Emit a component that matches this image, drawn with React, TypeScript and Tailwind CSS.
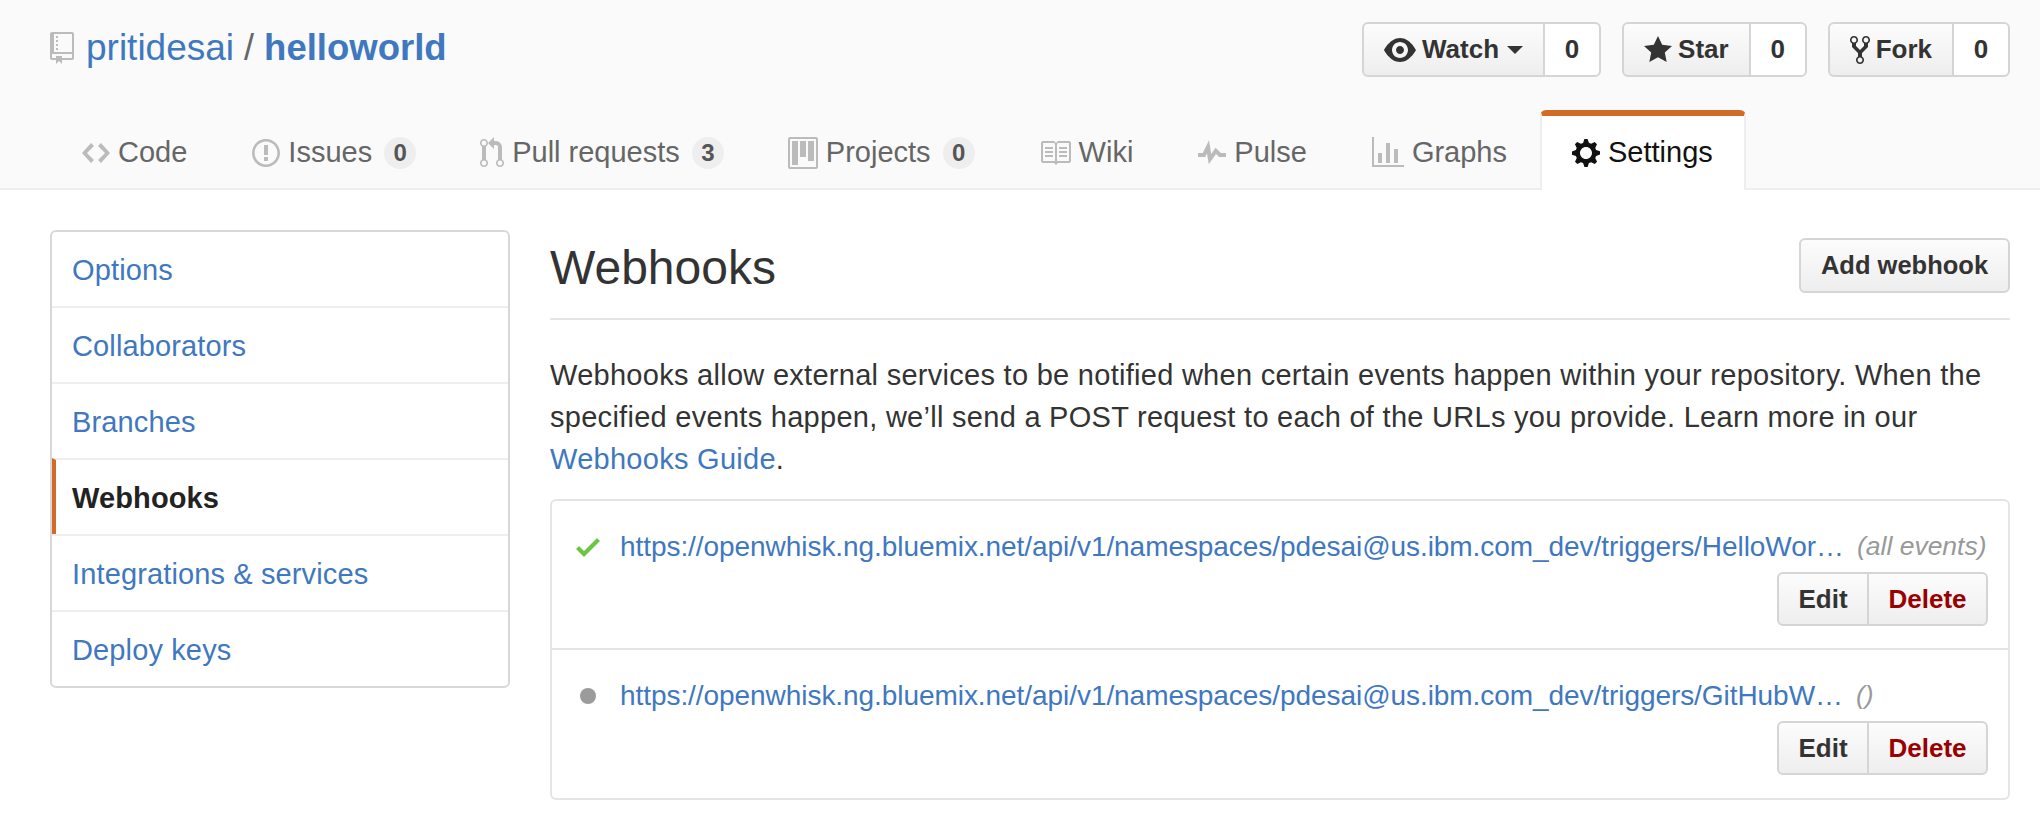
import React from 'react';

const icons: Record<string, { w: number; d: string }> = {
  repo: { w: 12, d: 'M4 9H3V8h1v1zm0-3H3v1h1V6zm0-2H3v1h1V4zm0-2H3v1h1V2zm8-1v12c0 .55-.45 1-1 1H6v2l-1.5-1.5L3 16v-2H1c-.55 0-1-.45-1-1V1c0-.55.45-1 1-1h10c.55 0 1 .45 1 1zm-1 10H1v2h2v-1h3v1h5v-2zm0-10H2v9h9V1z' },
  code: { w: 14, d: 'M9.5 3L8 4.5 11.5 8 8 11.5 9.5 13 14 8 9.5 3zm-5 0L0 8l4.5 5L6 11.5 2.5 8 6 4.5 4.5 3z' },
  issue: { w: 14, d: 'M7 2.3c3.14 0 5.7 2.56 5.7 5.7s-2.56 5.7-5.7 5.7A5.71 5.71 0 0 1 1.3 8c0-3.14 2.56-5.7 5.7-5.7zM7 1C3.14 1 0 4.14 0 8s3.14 7 7 7 7-3.14 7-7-3.14-7-7-7zm1 3H6v5h2V4zm0 6H6v2h2v-2z' },
  pull: { w: 12, d: 'M11 11.28V5c-.03-.78-.34-1.47-.94-2.06C9.46 2.35 8.78 2.03 8 2H7V0L4 3l3 3V4h1c.27.02.48.11.69.31.21.2.3.42.31.69v6.28A1.993 1.993 0 0 0 10 15a1.993 1.993 0 0 0 1-3.72zm-1 2.92c-.66 0-1.2-.55-1.2-1.2 0-.65.55-1.2 1.2-1.2.65 0 1.2.55 1.2 1.2 0 .65-.55 1.2-1.2 1.2zM4 3c0-1.11-.89-2-2-2a1.993 1.993 0 0 0-1 3.72v6.56A1.993 1.993 0 0 0 2 15a1.993 1.993 0 0 0 1-3.72V4.72c.59-.34 1-.98 1-1.72zm-.8 10c0 .66-.55 1.2-1.2 1.2-.65 0-1.2-.55-1.2-1.2 0-.65.55-1.2 1.2-1.2.65 0 1.2.55 1.2 1.2zM2 4.2C1.34 4.2.8 3.65.8 3c0-.65.55-1.2 1.2-1.2.65 0 1.2.55 1.2 1.2 0 .65-.55 1.2-1.2 1.2z' },
  project: { w: 15, d: 'M10 12h3V2h-3v10zm-4-2h3V2H6v8zm-4 4h3V2H2v12zm-1 1h13V1H1v14zM14 0H1a1 1 0 0 0-1 1v14a1 1 0 0 0 1 1h13a1 1 0 0 0 1-1V1a1 1 0 0 0-1-1z' },
  book: { w: 16, d: 'M3 5h4v1H3V5zm0 3h4V7H3v1zm0 2h4V9H3v1zm11-5h-4v1h4V5zm0 2h-4v1h4V7zm0 2h-4v1h4V9zm2-6v9c0 .55-.45 1-1 1H9.5l-1 1-1-1H2c-.55 0-1-.45-1-1V3c0-.55.45-1 1-1h5.5l1 1 1-1H15c.55 0 1 .45 1 1zm-8 .5L7.5 3H2v9h6V3.5zm7-.5H9.5l-.5.5V12h6V3z' },
  pulse: { w: 14, d: 'M11.5 8L8.8 5.4 6.6 8.5 5.5 1.6 2.38 8H0v2h3.6l.9-1.8.9 5.4L9 8.5l1.6 1.5H14V8z' },
  graph: { w: 16, d: 'M16 14v1H0V0h1v14h15zM5 13H3V8h2v5zm4 0H7V3h2v10zm4 0h-2V6h2v7z' },
  gear: { w: 14, d: 'M14 8.77v-1.6l-1.94-.64-.45-1.09.88-1.84-1.13-1.13-1.81.91-1.09-.45-.69-1.92h-1.6l-.63 1.94-1.11.45-1.84-.88-1.13 1.13.91 1.81-.45 1.09L0 7.23v1.59l1.94.64.45 1.09-.88 1.84 1.13 1.13 1.81-.91 1.09.45.69 1.92h1.59l.63-1.94 1.11-.45 1.84.88 1.13-1.13-.92-1.81.47-1.09L14 8.75v.02zM7 11c-1.66 0-3-1.34-3-3s1.34-3 3-3 3 1.34 3 3-1.34 3-3 3z' },
  eye: { w: 16, d: 'M8.06 2C3 2 0 8 0 8s3 6 8.06 6C13 14 16 8 16 8s-3-6-7.94-6zM8 12c-2.2 0-4-1.78-4-4 0-2.2 1.8-4 4-4 2.22 0 4 1.8 4 4 0 2.22-1.78 4-4 4zm2-4c0 1.11-.89 2-2 2-1.11 0-2-.89-2-2 0-1.11.89-2 2-2 1.11 0 2 .89 2 2z' },
  star: { w: 14, d: 'M14 6l-4.9-.64L7 1 4.9 5.36 0 6l3.6 3.26L2.67 14 7 11.67 11.33 14l-.93-4.74L14 6z' },
  fork: { w: 10, d: 'M8 1a1.993 1.993 0 0 0-1 3.72V6L5 8 3 6V4.72A1.993 1.993 0 0 0 2 1a1.993 1.993 0 0 0-1 3.72V6.5l3 3v1.78A1.993 1.993 0 0 0 5 15a1.993 1.993 0 0 0 1-3.72V9.5l3-3V4.72A1.993 1.993 0 0 0 8 1zM2 4.2C1.34 4.2.8 3.65.8 3c0-.65.55-1.2 1.2-1.2.65 0 1.2.55 1.2 1.2 0 .65-.55 1.2-1.2 1.2zm3 10c-.66 0-1.2-.55-1.2-1.2 0-.65.55-1.2 1.2-1.2.65 0 1.2.55 1.2 1.2 0 .65-.55 1.2-1.2 1.2zm3-10c-.66 0-1.2-.55-1.2-1.2 0-.65.55-1.2 1.2-1.2.65 0 1.2.55 1.2 1.2 0 .65-.55 1.2-1.2 1.2z' },
  check: { w: 12, d: 'M12 5l-8 8-4-4 1.5-1.5L4 10l6.5-6.5L12 5z' },
};

function Icon({ name, className }: { name: string; className?: string }) {
  const icon = icons[name];
  return (
    <svg
      viewBox={`0 0 ${icon.w} 16`}
      width={icon.w * 2}
      height={32}
      fill="currentColor"
      className={className}
      aria-hidden="true"
    >
      <path fillRule="evenodd" d={icon.d} />
    </svg>
  );
}

function RepoAction({ icon, label, count, caret }: { icon: string; label: string; count: string; caret?: boolean }) {
  return (
    <div className="flex h-[55px] text-[26px] font-bold text-[#333]">
      <div className="flex items-center gap-[6px] rounded-l-[6px] border-2 border-[#d5d5d5] bg-linear-to-b from-[#fcfcfc] to-[#eeeeee] px-[20px]">
        <Icon name={icon} className="shrink-0" />
        <span>{label}</span>
        {caret && <span className="ml-[2px] h-0 w-0 border-x-[8px] border-t-[8px] border-x-transparent border-t-[#333]" />}
      </div>
      <div className="-ml-[2px] flex w-[58px] items-center justify-center rounded-r-[6px] border-2 border-[#d5d5d5] bg-white">
        {count}
      </div>
    </div>
  );
}

function Tab({ icon, label, count }: { icon: string; label: string; count?: string }) {
  return (
    <a className="flex h-[79px] items-center gap-[8px] px-[32px] pt-[6px] text-[29px] text-[#666]">
      <Icon name={icon} className="shrink-0 text-[#bbbbbb]" />
      <span className="mr-[1px]">{label}</span>
      {count && (
        <span className="ml-[3px] flex h-[32px] min-w-[32px] items-center justify-center rounded-full bg-[#eeeeee] text-[24px] font-bold text-[#555]">
          {count}
        </span>
      )}
    </a>
  );
}

const menu = ['Options', 'Collaborators', 'Branches', 'Webhooks', 'Integrations & services', 'Deploy keys'];

function HookRow({ url, events, ok }: { url: string; events: string; ok?: boolean }) {
  return (
    <div className="h-[147px] pl-[24px] pr-[20px] pt-[21px]">
      <div className="flex h-[50px] items-center">
        <div className="flex w-[44px] shrink-0 justify-start">
          {ok ? (
            <Icon name="check" className="text-[#6cc644]" />
          ) : (
            <span className="ml-[4px] h-[16px] w-[16px] rounded-full bg-[#9b9b9b]" />
          )}
        </div>
        <a className="text-[28px] tracking-[-0.06px] whitespace-nowrap text-[#4078c0]">{url}</a>
        <em className="ml-[13px] text-[26.5px] whitespace-nowrap text-[#999]">{events}</em>
      </div>
      <div className="flex justify-end">
        <div className="flex h-[54px] text-[26px] font-bold">
          <div className="flex w-[92px] items-center justify-center rounded-l-[6px] border-2 border-[#d5d5d5] bg-linear-to-b from-[#fcfcfc] to-[#eeeeee] text-[#333]">
            Edit
          </div>
          <div className="-ml-[2px] flex w-[121px] items-center justify-center rounded-r-[6px] border-2 border-[#d5d5d5] bg-linear-to-b from-[#fcfcfc] to-[#eeeeee] text-[#900]">
            Delete
          </div>
        </div>
      </div>
    </div>
  );
}

export default function App() {
  return (
    <div className="h-[822px] w-[2040px] overflow-hidden bg-white font-['Liberation_Sans',Arial,sans-serif] text-[#333]">
      {/* Repo header */}
      <header className="h-[190px] border-b-2 border-[#eeeeee] bg-[#fafafa]">
        <div className="flex h-[110px] items-start justify-between pl-[50px] pr-[30px] pt-[22px]">
          <h1 className="flex items-center gap-[12px] pt-[5px] text-[36px] leading-[42px] text-[#666]">
            <Icon name="repo" className="shrink-0 text-[#bbbbbb]" />
            <span>
              <a className="text-[37px] text-[#4078c0]">pritidesai</a> / <a className="text-[36.5px] font-bold text-[#4078c0]">helloworld</a>
            </span>
          </h1>
          <div className="flex gap-[21px]">
            <RepoAction icon="eye" label="Watch" count="0" caret />
            <RepoAction icon="star" label="Star" count="0" />
            <RepoAction icon="fork" label="Fork" count="0" />
          </div>
        </div>
        <nav className="flex pl-[50px]">
          <Tab icon="code" label="Code" />
          <Tab icon="issue" label="Issues" count="0" />
          <Tab icon="pull" label="Pull requests" count="3" />
          <Tab icon="project" label="Projects" count="0" />
          <Tab icon="book" label="Wiki" />
          <Tab icon="pulse" label="Pulse" />
          <Tab icon="graph" label="Graphs" />
          <a className="flex h-[80px] w-[206px] items-center gap-[8px] rounded-t-[6px] border-x-2 border-t-[6px] border-x-[#eeeeee] border-t-[#d16b25] bg-white pl-[30px] text-[29px] text-[#111]">
            <Icon name="gear" className="shrink-0" />
            <span>Settings</span>
          </a>
        </nav>
      </header>

      <main className="flex pl-[50px] pr-[30px] pt-[40px]">
        {/* Side menu */}
        <aside className="h-[458px] w-[460px] shrink-0 overflow-hidden rounded-[6px] border-2 border-[#d8d8d8] bg-white text-[29px] tracking-[0.13px]">
          {menu.map((item, i) => (
            <a
              key={item}
              className={
                item === 'Webhooks'
                  ? 'flex h-[76px] items-center border-l-[4px] border-l-[#d16b25] border-t-2 border-t-[#eeeeee] pl-[16px] pt-[3px] font-bold text-[#222]'
                  : i === 0
                    ? 'flex h-[74px] items-center pl-[20px] pt-[3px] text-[#4078c0]'
                    : 'flex h-[76px] items-center border-t-2 border-[#eeeeee] pl-[20px] pt-[3px] text-[#4078c0]'
              }
            >
              {item}
            </a>
          ))}
        </aside>

        {/* Webhooks panel */}
        <section className="ml-[40px] w-[1460px]">
          <div className="flex h-[90px] items-start justify-between border-b-2 border-[#e5e5e5]">
            <h2 className="pt-[5px] text-[48px] leading-[66px] text-[#333]">Webhooks</h2>
            <button className="mt-[8px] h-[55px] w-[211px] rounded-[6px] border-2 border-[#d5d5d5] bg-linear-to-b from-[#fcfcfc] to-[#eeeeee] text-[25.5px] font-bold text-[#333]">
              Add webhook
            </button>
          </div>
          <p className="mt-[34px] text-[29px] leading-[42px] tracking-[0.28px] text-[#333]">
            Webhooks allow external services to be notified when certain events happen within your repository. When the
            specified events happen, we’ll send a POST request to each of the URLs you provide. Learn more in our{' '}
            <a className="text-[#4078c0]">Webhooks Guide</a>.
          </p>
          <div className="mt-[19px] h-[301px] rounded-[6px] border-2 border-[#e5e5e5]">
            <HookRow
              ok
              url="https://openwhisk.ng.bluemix.net/api/v1/namespaces/pdesai@us.ibm.com_dev/triggers/HelloWor…"
              events="(all events)"
            />
            <div className="border-t-2 border-[#e5e5e5]">
              <HookRow
                url="https://openwhisk.ng.bluemix.net/api/v1/namespaces/pdesai@us.ibm.com_dev/triggers/GitHubW…"
                events="()"
              />
            </div>
          </div>
        </section>
      </main>
    </div>
  );
}
